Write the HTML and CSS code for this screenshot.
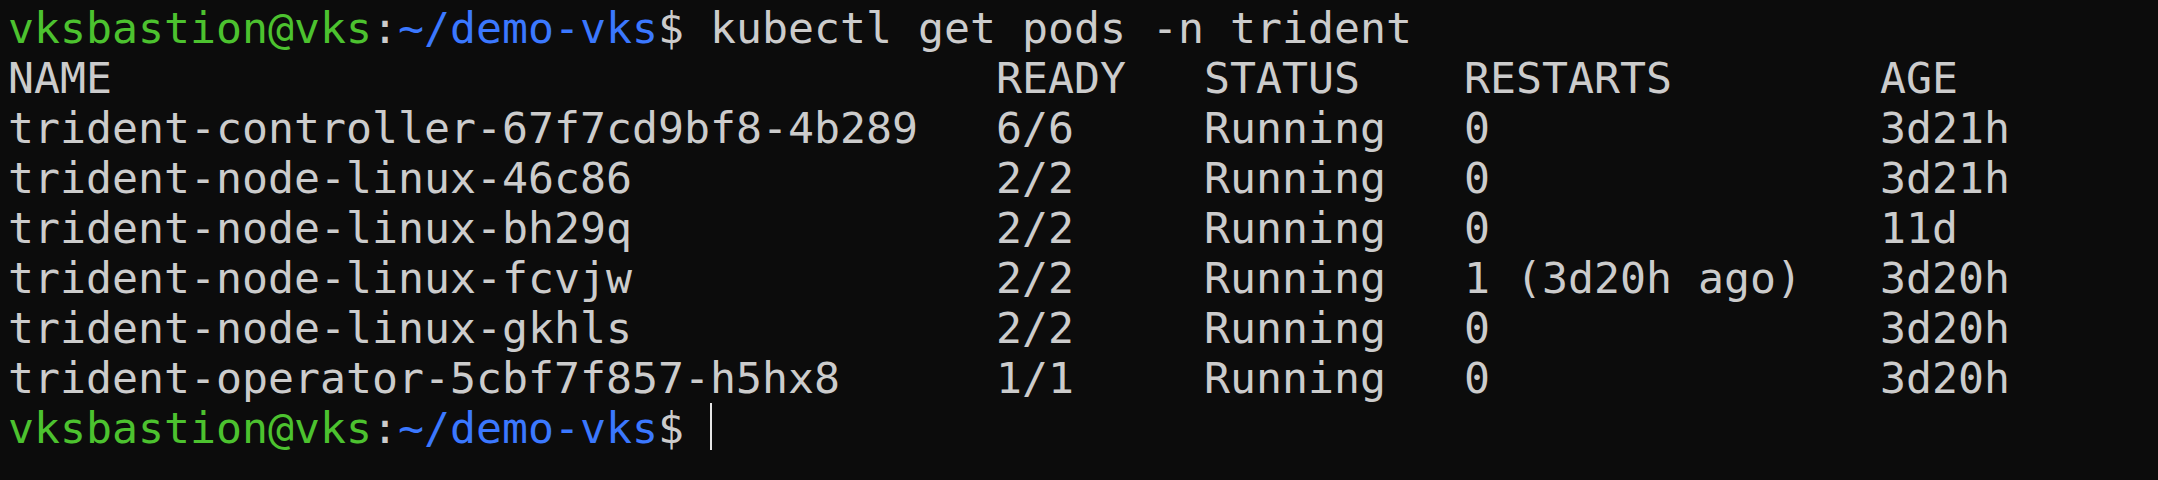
FILE: index.html
```html
<!DOCTYPE html>
<html>
<head>
<meta charset="utf-8">
<link rel="stylesheet" href="styles.css">
</head>
<body>
<pre class="term"><span class="user">vksbastion@vks</span>:<span class="path">~/demo-vks</span>$ kubectl get pods -n trident
NAME                                  READY   STATUS    RESTARTS        AGE
trident-controller-67f7cd9bf8-4b289   6/6     Running   0               3d21h
trident-node-linux-46c86              2/2     Running   0               3d21h
trident-node-linux-bh29q              2/2     Running   0               11d
trident-node-linux-fcvjw              2/2     Running   1 (3d20h ago)   3d20h
trident-node-linux-gkhls              2/2     Running   0               3d20h
trident-operator-5cbf7f857-h5hx8      1/1     Running   0               3d20h
<span class="user">vksbastion@vks</span>:<span class="path">~/demo-vks</span>$ <span class="cursor"></span></pre>
</body>
</html>
```
FILE: styles.css
```css
html, body {
  margin: 0;
  background: #0c0c0c;
  height: 100%;
}
body {
  padding: 3px 0 0 8px;
  box-sizing: border-box;
  overflow: hidden;
}
.term {
  margin: 0;
  font-family: "DejaVu Sans Mono", monospace;
  font-size: 43.2px;
  line-height: 50px;
  color: #cccccc;
  white-space: pre;
}
.user {
  color: #4cc22f;
}
.path {
  color: #3b78ff;
}
.cursor {
  display: inline-block;
  width: 2px;
  height: 47px;
  background: #e6e6e6;
  vertical-align: top;
}
```
